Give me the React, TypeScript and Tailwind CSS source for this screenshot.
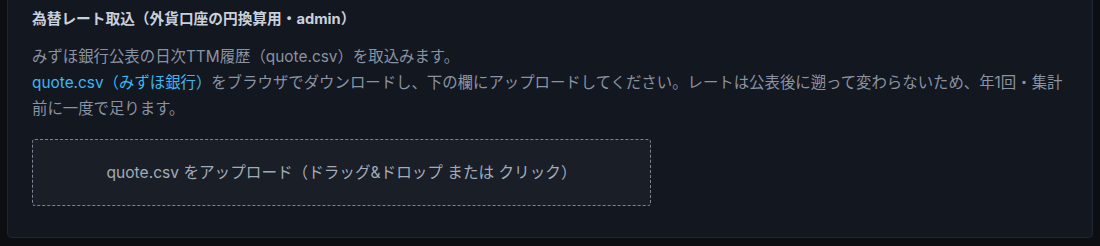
import React from 'react';

const FONT = 'font-["Inter","Noto_Sans_CJK_JP",sans-serif]';

const RateImportCard: React.FC = () => {
  return (
    <section className="mx-[7px] mb-[8px] rounded-b-[5px] border-x border-b border-[#1f2734] bg-[#131720] px-6 pb-[31px] pt-[9px]">
      <h3 className="text-[14.7px] font-bold leading-[20px] text-[#c8d0dc]">
        為替レート取込（外貨口座の円換算用・admin）
      </h3>

      <p className="mt-[15px] text-[15.4px] leading-[26px] text-[#8a93a3]">
        みずほ銀行公表の日次TTM履歴（quote.csv）を取込みます。
        <br />
        <a href="#" className="text-[#3db6f2]">
          quote.csv（みずほ銀行）
        </a>
        をブラウザでダウンロードし、下の欄にアップロードしてください。レートは公表後に遡って変わらないため、年1回・集計前に一度で足ります。
      </p>

      <label className="mt-[17px] flex h-[67px] w-[619px] cursor-pointer items-center justify-center rounded-[3px] border border-dashed border-[#7b8494] bg-[#1a1e27] text-[15.6px] text-[#a3abb8]">
        quote.csv をアップロード（ドラッグ&amp;ドロップ または クリック）
      </label>
    </section>
  );
};

export default function App() {
  return (
    <div className={`${FONT} min-h-[246px] w-[1100px] bg-[#0c0e12]`}>
      <RateImportCard />
    </div>
  );
}
